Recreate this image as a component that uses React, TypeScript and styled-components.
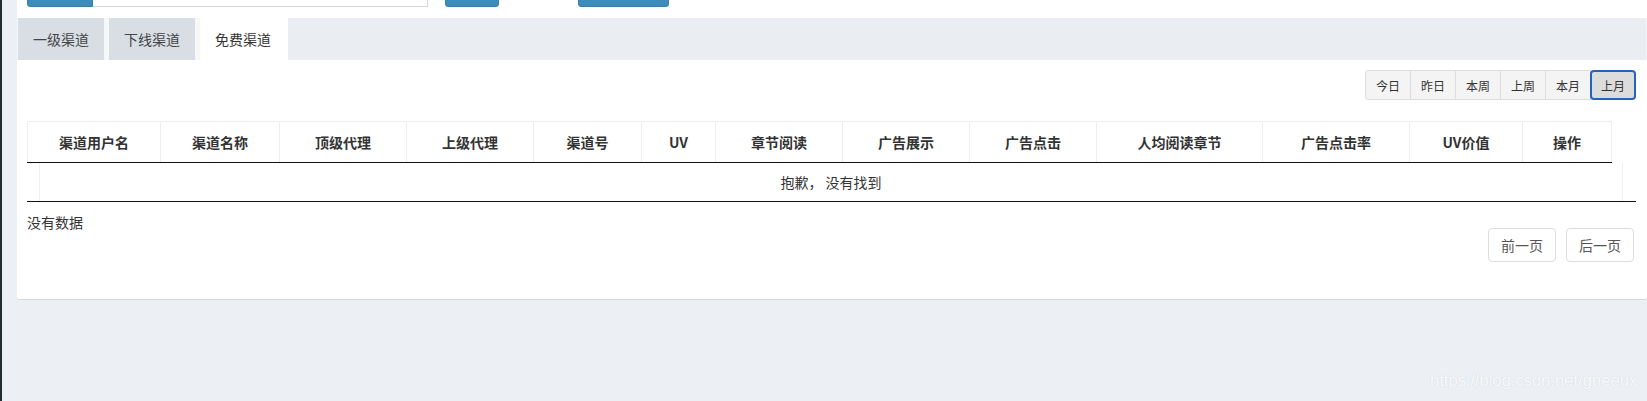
import React from "react";
import styled, { createGlobalStyle } from "styled-components";

const GlobalStyle = createGlobalStyle`
  html, body { margin: 0; padding: 0; height: 100%; }
  body {
    background: #ecf0f5;
    font-family: "Noto Sans CJK SC", "Liberation Sans", sans-serif;
    color: #333;
    font-size: 14px;
    overflow: hidden;
  }
  #root { min-height: 100vh; }
`;

const Layout = styled.div`
  display: flex;
  min-height: 100vh;
`;

const Sidebar = styled.div`
  width: 2px;
  background: #222d32;
  flex-shrink: 0;
`;

const Main = styled.div`
  flex: 1;
  padding-left: 15px;
  position: relative;
`;

const SearchBox = styled.div`
  background: #fff;
  height: 18px;
  padding: 0 10px;
  overflow: hidden;
`;

const SearchRow = styled.div`
  display: flex;
  align-items: stretch;
  height: 34px;
  margin-top: -27px;
`;

const BlueBtn = styled.div<{ $w: number; $ml?: number; $group?: boolean }>`
  width: ${(p) => p.$w}px;
  margin-left: ${(p) => p.$ml ?? 0}px;
  background: #3c8dbc;
  border: 1px solid #367fa9;
  box-sizing: border-box;
  border-radius: ${(p) => (p.$group ? "0 0 0 3px" : "0 0 3px 3px")};
`;

const SearchInput = styled.div`
  width: 335px;
  box-sizing: border-box;
  background: #fff;
  border: 1px solid #d2d6de;
  border-left: none;
`;

const TabBox = styled.div`
  background: #fff;
  border-bottom: 1px solid #d2d6de;
  border-radius: 0 0 3px 3px;
`;

const TabBar = styled.div`
  display: flex;
  gap: 5px;
  background: #f5f7f9;
  height: 42px;
  padding-left: 1px;
`;

const Tab = styled.div<{ $active?: boolean }>`
  padding: 11px 15px;
  line-height: 20px;
  font-size: 14px;
  color: ${(p) => (p.$active ? "#333" : "#444")};
  background: ${(p) => (p.$active ? "#fff" : "#d8dee4")};
  width: ${(p) => (p.$active ? 58 : 56)}px;
  white-space: nowrap;
`;

const TabFiller = styled.div`
  flex: 1;
  background: #eaeef2;
  margin-left: -5px;
  margin-right: 1px;
`;

const TabContent = styled.div`
  padding: 10px 10px 37px 10px;
`;

const Toolbar = styled.div`
  display: flex;
  justify-content: flex-end;
  padding-right: 1px;
`;

const BtnGroup = styled.div`
  display: flex;
`;

const DateBtn = styled.div<{ $active?: boolean; $first?: boolean; $last?: boolean }>`
  box-sizing: border-box;
  height: 30px;
  width: 46px;
  margin-left: ${(p) => (p.$first ? 0 : -1)}px;
  display: flex;
  align-items: center;
  justify-content: center;
  font-size: 12px;
  color: #333;
  background: ${(p) => (p.$active ? "#dcdcdc" : "#f4f4f4")};
  border: ${(p) => (p.$active ? "2px solid #2563c0" : "1px solid #ddd")};
  border-radius: ${(p) => (p.$first ? "3px 0 0 3px" : p.$last ? "4px" : "0")};
  position: ${(p) => (p.$active ? "relative" : "static")};
`;

const HeadTable = styled.table`
  margin-top: 21px;
  border-collapse: collapse;
  table-layout: fixed;
  width: 1584px;
`;

const Th = styled.th`
  border: 1px solid #eee;
  border-bottom: 1px solid #111;
  padding: 10px 4px;
  line-height: 20px;
  font-size: 14px;
  font-weight: bold;
  color: #333;
  text-align: center;
  white-space: nowrap;
`;

const BodyScroll = styled.div`
  width: 1609px;
  border-bottom: 1px solid #111;
`;

const BodyTable = styled.table`
  margin-left: 12px;
  width: 1584px;
  border-collapse: collapse;
`;

const EmptyCell = styled.td`
  border-left: 1px solid #f0f0f0;
  border-right: 1px solid #f0f0f0;
  padding: 10px 0 9px;
  line-height: 19px;
  font-size: 14px;
  color: #333;
  text-align: center;
  white-space: pre;
`;

const Footer = styled.div`
  display: flex;
  justify-content: space-between;
  align-items: flex-start;
`;

const Info = styled.div`
  padding-top: 10px;
  line-height: 20px;
  font-size: 14px;
  color: #333;
`;

const Pager = styled.div`
  display: flex;
  gap: 10px;
  margin-top: 26px;
  margin-right: 3px;
`;

const PageBtn = styled.div`
  box-sizing: border-box;
  width: 68px;
  height: 34px;
  display: flex;
  align-items: center;
  justify-content: center;
  border: 1px solid #ddd;
  border-radius: 4px;
  background: #fff;
  color: #555;
  font-size: 14px;
`;

const Watermark = styled.div`
  position: absolute;
  right: 10px;
  bottom: 10px;
  font-family: "Liberation Sans", Arial, sans-serif;
  font-size: 17px;
  color: rgba(255, 255, 255, 0.9);
  text-shadow: 0 0 1px rgba(170, 175, 185, 0.5);
  letter-spacing: -0.2px;
`;

const columns = [
  { t: "渠道用户名", w: 133 },
  { t: "渠道名称", w: 119 },
  { t: "顶级代理", w: 127 },
  { t: "上级代理", w: 127 },
  { t: "渠道号", w: 108 },
  { t: "UV", w: 74 },
  { t: "章节阅读", w: 127 },
  { t: "广告展示", w: 127 },
  { t: "广告点击", w: 127 },
  { t: "人均阅读章节", w: 166 },
  { t: "广告点击率", w: 147 },
  { t: "UV价值", w: 113 },
  { t: "操作", w: 89 },
];

const dates = ["今日", "昨日", "本周", "上周", "本月", "上月"];

export default function App() {
  return (
    <>
      <GlobalStyle />
      <Layout>
        <Sidebar />
        <Main>
          <SearchBox>
            <SearchRow>
              <BlueBtn $w={66} $group />
              <SearchInput />
              <BlueBtn $w={54} $ml={17} />
              <BlueBtn $w={91} $ml={79} />
            </SearchRow>
          </SearchBox>
          <TabBox>
            <TabBar>
              <Tab>一级渠道</Tab>
              <Tab>下线渠道</Tab>
              <Tab $active>免费渠道</Tab>
              <TabFiller />
            </TabBar>
            <TabContent>
              <Toolbar>
                <BtnGroup>
                  {dates.map((d, i) => (
                    <DateBtn
                      key={d}
                      $first={i === 0}
                      $last={i === dates.length - 1}
                      $active={i === dates.length - 1}
                    >
                      {d}
                    </DateBtn>
                  ))}
                </BtnGroup>
              </Toolbar>
              <HeadTable>
                <colgroup>
                  {columns.map((c) => (
                    <col key={c.t} style={{ width: c.w }} />
                  ))}
                </colgroup>
                <thead>
                  <tr>
                    {columns.map((c) => (
                      <Th key={c.t}>{c.t}</Th>
                    ))}
                  </tr>
                </thead>
              </HeadTable>
              <BodyScroll>
                <BodyTable>
                  <tbody>
                    <tr>
                      <EmptyCell>抱歉， 没有找到</EmptyCell>
                    </tr>
                  </tbody>
                </BodyTable>
              </BodyScroll>
              <Footer>
                <Info>没有数据</Info>
                <Pager>
                  <PageBtn>前一页</PageBtn>
                  <PageBtn>后一页</PageBtn>
                </Pager>
              </Footer>
            </TabContent>
          </TabBox>
          <Watermark>https://blog.csdn.net/gneeux</Watermark>
        </Main>
      </Layout>
    </>
  );
}
